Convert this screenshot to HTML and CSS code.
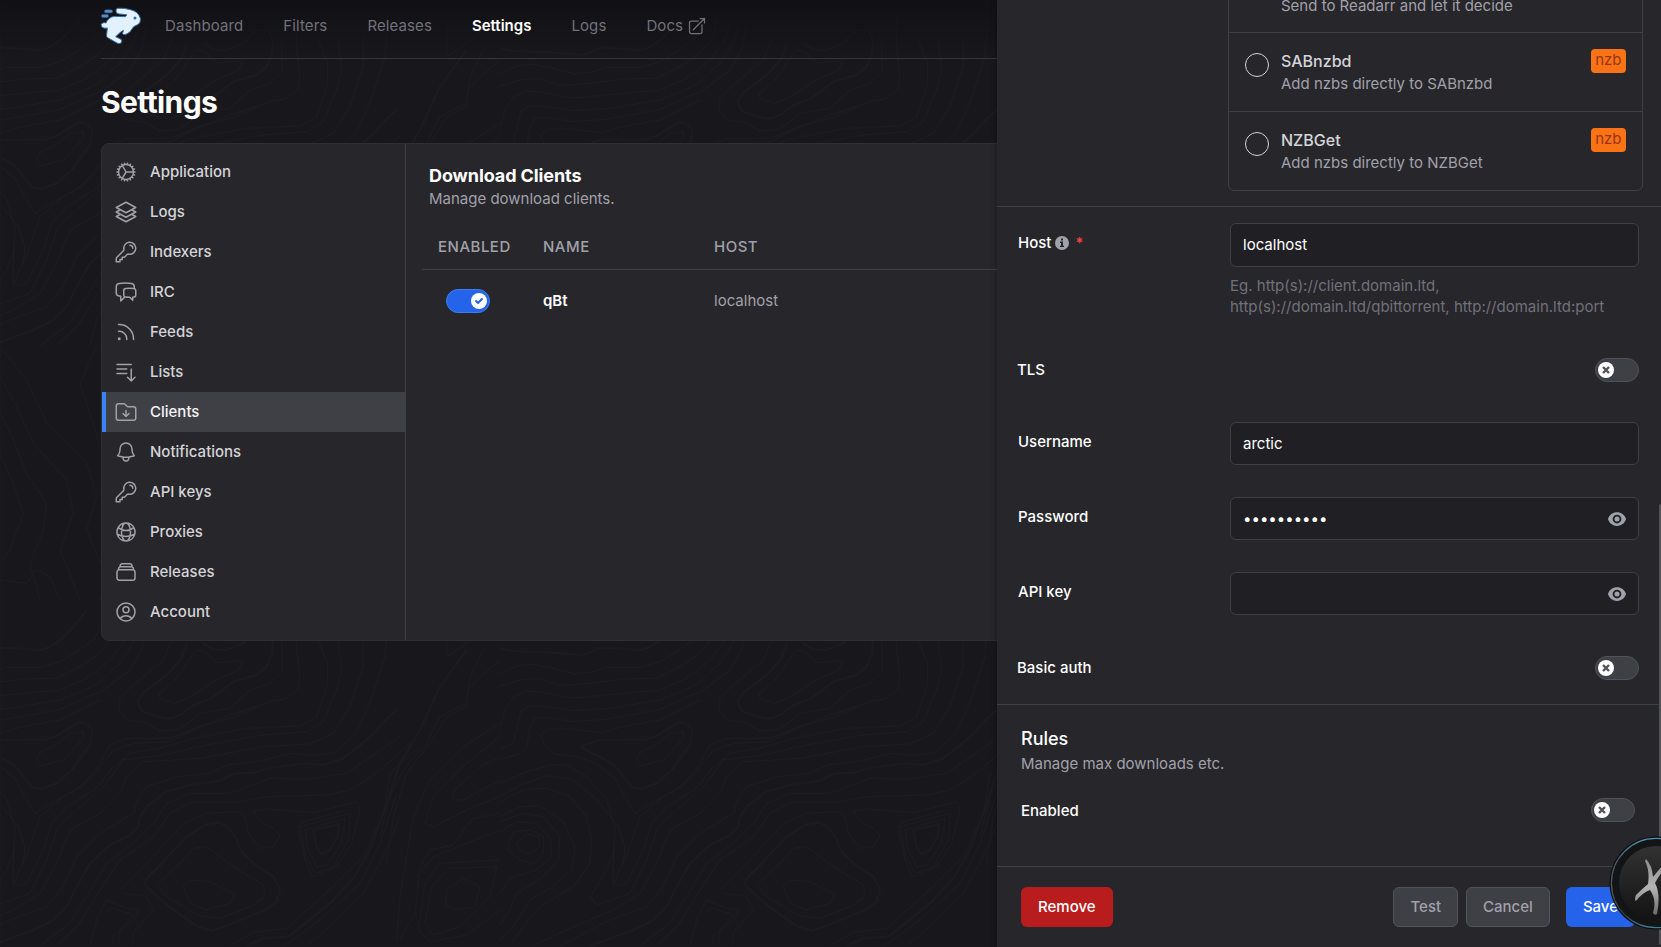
FILE: index.html
```html
<!DOCTYPE html>
<html lang="en">

<head>
  <meta charset="UTF-8">
  <title>Settings</title>
  <link rel="stylesheet" href="styles.css">
</head>

<body>
  <!-- topography background, 600x600 tile -->
  <svg class="topography" width="1661" height="947">
    <defs>
      <pattern id="topo" width="600" height="600" patternUnits="userSpaceOnUse">
        <g id="contours" transform="translate(500 30) scale(.33333)" fill="none" stroke-linejoin="round">
          <g stroke-width="5">
            <path d="M0 55L40 63 150 67 240 75 270 68 300 53 350 55 420 61 450 50 475 35 520 -10 560 -60" />
            <path d="M860 40L845 85 800 135 730 188 712 215 725 242 770 260 810 266 840 255 880 226 930 208 1000 155 1070 135 1100 110 1117 70 1118 30 1105 0 1070 0 1030 40 980 60 940 58 910 40" />
            <path d="M440 328L300 330 245 348 250 356 340 402 395 472 420 477 470 460 515 420 570 345 578 300 555 277 530 280 470 318Z" />
            <path d="M1490 240L1465 262 1400 330 1330 385 1270 405 1220 400 1120 412 1060 428 1005 430 960 452 870 465 800 485 740 530 720 560 715 590 690 615 630 645 570 700 530 770 500 830 460 870 400 900 270 947" />
            <path d="M740 745L790 695 860 620 920 583 955 577 985 592 1005 620 1025 665 1060 700 1120 740 1140 780 1130 815 1095 840 1010 875 935 903 890 888 800 825 745 775 733 760Z" />
            <path d="M1240 600L1285 590 1318 582 1312 620 1290 660 1265 673 1250 652Z" />
            <path d="M1040 947L1090 925 1165 920 1210 885 1290 820 1360 745 1410 660 1460 520 1500 400 1560 300 1620 170 1700 60" />
          </g>
          <g stroke-width="3">
            <path d="M0 130L50 108 100 103 160 115 225 132 280 125 320 112 420 112 480 95 530 65 580 30 600 0 620 -60" />
            <path d="M0 168L60 150 120 145 180 167 270 160 370 147 470 145 540 110 600 70 640 20 650 -40" />
            <path d="M0 300L15 240 40 200 80 184 120 186 220 204 370 190 480 180 560 145 630 90 670 40 690 -20" />
            <path d="M0 355L40 340 50 300 62 245 90 228 130 228 220 242 330 235 480 210 590 165 660 100 700 40 720 -30" />
            <path d="M0 388L60 372 80 350 90 290 105 265 135 262 220 275 320 268 480 238 610 180 690 120 725 60 740 -20" />
            <path d="M600 210L480 270 370 290 300 308 200 296 140 298 122 315 135 350 165 372 230 380 290 400 350 450 385 520 405 550 460 515 540 475 600 400 630 345 680 325 810 325 900 290 1000 262 1100 220" />
            <path d="M820 20L790 90 700 165 660 205 658 240 680 270 730 276 780 303 840 298 900 250 990 235 1050 180 1110 160 1145 125 1145 20" />
            <path d="M890 60L915 65 950 98 1010 93 1028 97 1015 120 950 150 870 200 825 220 780 205 778 190 830 145 870 85Z" />
            <path d="M1190 -40L1190 60 1200 130 1195 175 1160 205 1110 215 990 255 880 300 810 335 700 340 640 360 600 410 570 450 490 500 420 560 390 650 340 765 340 700 345 590 320 510 260 440 200 405 150 405 80 425 0 460" />
            <path d="M1255 30L1283 100 1283 160 1250 260 1200 288 1040 295 880 325 780 355 690 370 640 410 590 475 500 530 455 580 430 660 380 760 340 768" />
            <path d="M1313 20L1325 120 1310 180 1270 275 1225 305 1090 315 920 345 790 375 670 390 610 470 530 540 475 590 440 690 390 790 290 825 272 800 320 720 345 650" />
            <path d="M1390 20L1390 110 1350 230 1300 310 1230 342 1090 350 900 385 730 395 680 440 660 490 600 550 510 600 470 700 420 790 340 840 200 900 100 947" />
            <path d="M1460 0L1455 80 1420 190 1370 310 1300 370 1240 376 1170 370 1080 393 980 405 930 430 830 440 740 470 715 500 700 550 600 610 530 680 490 770 440 830 330 870 180 947" />
            <path d="M1500 320L1420 375 1340 430 1230 447 1110 445 990 490 870 490 800 520 760 580 710 630 620 700 560 800 510 880 420 947" />
            <path d="M1530 340L1430 430 1350 480 1280 495 1100 500 1010 517 870 517 810 550 760 620 660 690 600 780 540 880 470 947" />
            <path d="M1560 350L1470 430 1450 550 1390 680 1300 770 1210 850 1160 895 1060 907 990 947" />
            <path d="M660 780L750 690 850 580 920 550 1020 545 1035 560 1045 610 1080 655 1120 650 1140 615 1120 595 1080 575 1060 545 1100 537 1240 548 1370 515 1380 540 1355 640 1310 710 1240 742 1215 690 1192 590 1210 575 1330 543" />
            <path d="M770 765L840 700 880 655 920 650 1000 710 1090 765 1095 800 1060 825 960 865 900 858 800 800Z" />
            <path d="M850 770L870 750 930 755 1005 795 990 820 920 840 870 820Z" />
            <path d="M1215 600L1335 565 1325 640 1280 705 1250 710 1225 660Z" />
            <path d="M1200 590L1350 550 1345 630 1300 710 1245 730 1215 670Z" />
            <path d="M410 385L425 365 460 350 510 310 550 305 550 325 490 390 420 407Z" />
            <path d="M0 500L60 465 140 437 220 450 290 510 355 590 375 650 370 700" />
            <path d="M0 515L70 480 140 474 210 500 260 560 275 630 270 700 220 770 120 830 70 890 30 947" />
            <path d="M0 560L60 530 120 528 190 575 225 650 215 720 150 775 90 810 40 890 0 930" />
            <path d="M0 575L70 550 130 560 180 620 175 690 130 740 50 790 30 840 0 885" />
            <path d="M0 605L50 575 110 580 150 625 155 680 110 720 30 745 0 790" />
            <path d="M25 640L40 605 95 600 130 620 130 670 105 700 60 690 25 660Z" />
            <path d="M50 640L80 612 115 620 120 650 90 672 60 662Z" />
            <path d="M570 947L590 870 620 810 680 835 720 840 700 870 640 920 640 947" />
            <path d="M610 850L640 835 700 855 660 900 655 947M670 790L740 800 760 840 700 910 695 947" />
            <path d="M1490 490L1440 640 1380 760 1260 870 1170 935 1150 947M1500 560L1450 680 1390 790 1290 890 1220 947" />
            <path d="M1640 -20L1640 80 1700 40 1760 -10M1750 60L1710 140 1700 220 1620 260 1580 340 1510 420 1470 500 1440 620" />
            <path d="M1800 90L1730 150 1705 180 1700 230 1640 260 1590 340 1520 430 1480 560 1460 700" />
            <path d="M1800 380L1740 410 1665 480 1655 510 1690 510 1800 450M1800 320L1700 400 1600 500 1575 580 1600 590 1720 530 1800 500" />
            <path d="M1800 280L1690 350 1590 450 1540 560 1500 800 1490 930M1800 550L1720 565 1690 600 1660 645 1590 660 1560 710 1545 850 1500 930" />
            <path d="M1790 710L1650 715 1595 770 1575 880 1600 915 1680 890 1770 800Z" />
            <path d="M1640 780L1690 745 1740 770 1725 830 1660 840 1638 825Z" />
            <path d="M1800 690L1620 700 1575 760 1555 900 1590 935 1700 915 1800 840M1800 600L1700 640 1600 680 1550 740" />
          </g>
          <!-- part of the tile below the visible hills -->
          <g stroke-width="3">
            <path d="M300 950L380 1050 440 1180 560 1300 590 1400 560 1500 620 1640 600 1710M300 1040L350 1130 400 1240 500 1350 520 1450 480 1560 540 1710M300 1150L340 1230 380 1330 440 1420 430 1500 390 1600 420 1710M300 1270L340 1360 370 1450 330 1560 300 1600M300 1650L380 1660 410 1620 450 1640 480 1710M590 950L540 1060 570 1150 600 1250" />
          </g>
        </g>
        <use href="#contours" x="-600" />
      </pattern>
    </defs>
    <rect width="1661" height="947" fill="url(#topo)" />
  </svg>

  <div class="page">
    <header class="header">
      <nav class="nav">
        <svg class="logo" viewBox="61 18 126 120">
          <g fill="#5a8fc8" stroke="#1d4168" stroke-width="2">
            <rect x="74" y="29" width="25" height="10" rx="5" />
            <rect x="65" y="43" width="22" height="10" rx="5" />
          </g>
          <path fill="#e2f1fd" stroke="#2f70aa" stroke-width="3" stroke-linejoin="round" d="M113 25Q134 23 152 29Q176 34 182 55Q184 71 170 76Q160 79 157 87Q151 99 139 103Q131 106 128 100Q132 95 131 91L122 97L108 110L124 118Q129 122 124 129Q118 133 112 129L84 113Q79 110 81 103L83 84Q72 87 66 80Q62 72 69 69Q74 67 79 69Q85 52 104 49L136 50Q142 47 141 44L119 42Q108 41 109 33Q109 27 113 25Z" />
          <circle cx="166" cy="54" r="4.5" fill="#2f70aa" />
        </svg>
        <a class="nav-link">Dashboard</a>
        <a class="nav-link">Filters</a>
        <a class="nav-link">Releases</a>
        <a class="nav-link active">Settings</a>
        <a class="nav-link">Logs</a>
        <a class="nav-link">Docs
          <svg class="external" viewBox="0 0 24 24"><path d="M13.5 6H5.25A2.25 2.25 0 0 0 3 8.25v10.5A2.25 2.25 0 0 0 5.25 21h10.5A2.25 2.25 0 0 0 18 18.75V10.5m-10.5 6L21 3m0 0h-5.25M21 3v5.25" /></svg>
        </a>
      </nav>
    </header>

    <h1 class="title">Settings</h1>

    <div class="card">
      <aside class="sidebar">
        <a class="side-link">
          <svg viewBox="0 0 24 24"><path d="M4.5 12a7.5 7.5 0 0 0 15 0m-15 0a7.5 7.5 0 1 1 15 0m-15 0H3m16.5 0H21m-1.5 0H12m-8.457 3.077 1.41-.513m14.095-5.13 1.41-.513M5.106 17.785l1.15-.964m11.49-9.642 1.149-.964M7.501 19.795l.75-1.3m7.5-12.99.75-1.3m-6.063 16.658.26-1.477m2.605-14.772.26-1.477m0 17.726-.26-1.477M10.698 4.614l-.26-1.477M16.5 19.794l-.75-1.299M7.5 4.205 12 12m6.894 5.785-1.149-.964M6.256 7.178l-1.15-.964m15.352 8.864-1.41-.513M4.954 9.435l-1.41-.514M12.002 12l-3.75 6.495" /></svg>
          <span>Application</span>
        </a>
        <a class="side-link">
          <svg viewBox="0 0 24 24"><path d="M6.429 9.75 2.25 12l4.179 2.25m0-4.5 5.571 3 5.571-3m-11.142 0L2.25 7.5 12 2.25l9.75 5.25-4.179 2.25m0 0L21.75 12l-4.179 2.25m0 0 4.179 2.25L12 21.75 2.25 16.5l4.179-2.25m11.142 0-5.571 3-5.571-3" /></svg>
          <span>Logs</span>
        </a>
        <a class="side-link">
          <svg viewBox="0 0 24 24"><path id="key" d="M15.75 5.25a3 3 0 0 1 3 3m3 0a6 6 0 0 1-7.029 5.912c-.563-.097-1.159.026-1.563.43L10.5 17.25H8.25v2.25H6v2.25H2.25v-2.818c0-.597.237-1.17.659-1.591l6.499-6.499c.404-.404.527-1 .43-1.563A6 6 0 1 1 21.75 8.25Z" /></svg>
          <span>Indexers</span>
        </a>
        <a class="side-link">
          <svg viewBox="0 0 24 24"><path d="M20.25 8.511c.884.284 1.5 1.128 1.5 2.097v4.286c0 1.136-.847 2.1-1.98 2.193-.34.027-.68.052-1.02.072v3.091l-3-3c-1.354 0-2.694-.055-4.02-.163a2.115 2.115 0 0 1-.825-.242m9.345-8.334a2.126 2.126 0 0 0-.476-.095 48.64 48.64 0 0 0-8.048 0c-1.131.094-1.976 1.057-1.976 2.192v4.286c0 .837.46 1.58 1.155 1.951m9.345-8.334V6.637c0-1.621-1.152-3.026-2.76-3.235A48.455 48.455 0 0 0 11.25 3c-2.115 0-4.198.137-6.24.402-1.608.209-2.76 1.614-2.76 3.235v6.226c0 1.621 1.152 3.026 2.76 3.235.577.075 1.157.14 1.74.194V21l4.155-4.155" /></svg>
          <span>IRC</span>
        </a>
        <a class="side-link">
          <svg viewBox="0 0 24 24"><path d="M12.75 19.5v-.75a7.5 7.5 0 0 0-7.5-7.5H4.5m0-6.75h.75c7.87 0 14.25 6.38 14.25 14.25v.75M6 18.75a.75.75 0 1 1-1.5 0 .75.75 0 0 1 1.5 0Z" /></svg>
          <span>Feeds</span>
        </a>
        <a class="side-link">
          <svg viewBox="0 0 24 24"><path d="M3 4.5h14.25M3 9h9.75M3 13.5h9.75m4.5-4.5v12m0 0-3.75-3.75M17.25 21 21 17.25" /></svg>
          <span>Lists</span>
        </a>
        <a class="side-link active">
          <svg viewBox="0 0 24 24"><path d="m9 13.5 3 3m0 0 3-3m-3 3v-6m1.06-4.19-2.12-2.12a1.5 1.5 0 0 0-1.061-.44H4.5A2.25 2.25 0 0 0 2.25 6v12a2.25 2.25 0 0 0 2.25 2.25h15A2.25 2.25 0 0 0 21.75 18V9a2.25 2.25 0 0 0-2.25-2.25h-5.379a1.5 1.5 0 0 1-1.06-.44Z" /></svg>
          <span>Clients</span>
        </a>
        <a class="side-link">
          <svg viewBox="0 0 24 24"><path d="M14.857 17.082a23.848 23.848 0 0 0 5.454-1.31A8.967 8.967 0 0 1 18 9.75V9A6 6 0 0 0 6 9v.75a8.967 8.967 0 0 1-2.312 6.022c1.733.64 3.56 1.085 5.455 1.31m5.714 0a24.255 24.255 0 0 1-5.714 0m5.714 0a3 3 0 1 1-5.714 0" /></svg>
          <span>Notifications</span>
        </a>
        <a class="side-link">
          <svg viewBox="0 0 24 24"><use href="#key" /></svg>
          <span>API keys</span>
        </a>
        <a class="side-link">
          <svg viewBox="0 0 24 24"><path d="M12 21a9.004 9.004 0 0 0 8.716-6.747M12 21a9.004 9.004 0 0 1-8.716-6.747M12 21c2.485 0 4.5-4.03 4.5-9S14.485 3 12 3m0 18c-2.485 0-4.5-4.03-4.5-9S9.515 3 12 3m0 0a8.997 8.997 0 0 1 7.843 4.582M12 3a8.997 8.997 0 0 0-7.843 4.582m15.686 0A11.953 11.953 0 0 1 12 10.5c-2.998 0-5.74-1.1-7.843-2.918m15.686 0A8.959 8.959 0 0 1 21 12c0 .778-.099 1.533-.284 2.253m0 0A17.919 17.919 0 0 1 12 16.5c-3.162 0-6.133-.815-8.716-2.247m0 0A9.015 9.015 0 0 1 3 12c0-1.605.42-3.113 1.157-4.418" /></svg>
          <span>Proxies</span>
        </a>
        <a class="side-link">
          <svg viewBox="0 0 24 24"><path d="M6 6.878V6a2.25 2.25 0 0 1 2.25-2.25h7.5A2.25 2.25 0 0 1 18 6v.878m-12 0c.235-.083.487-.128.75-.128h10.5c.263 0 .515.045.75.128m-12 0A2.25 2.25 0 0 0 4.5 9v.878m13.5-3A2.25 2.25 0 0 1 19.5 9v.878m0 0a2.246 2.246 0 0 0-.75-.128H5.25c-.263 0-.515.045-.75.128m15 0A2.25 2.25 0 0 1 21 12v6a2.25 2.25 0 0 1-2.25 2.25H5.25A2.25 2.25 0 0 1 3 18v-6c0-.98.626-1.813 1.5-2.122" /></svg>
          <span>Releases</span>
        </a>
        <a class="side-link">
          <svg viewBox="0 0 24 24"><path d="M17.982 18.725A7.488 7.488 0 0 0 12 15.75a7.488 7.488 0 0 0-5.982 2.975m11.963 0a9 9 0 1 0-11.963 0m11.963 0A8.966 8.966 0 0 1 12 21a8.966 8.966 0 0 1-5.982-2.275M15 9.75a3 3 0 1 1-6 0 3 3 0 0 1 6 0Z" /></svg>
          <span>Account</span>
        </a>
      </aside>

      <main class="content">
        <h2 class="content-title">Download Clients</h2>
        <p class="content-sub">Manage download clients.</p>
        <div class="row row-head">
          <span>ENABLED</span>
          <span>NAME</span>
          <span>HOST</span>
        </div>
        <div class="row">
          <div class="toggle on">
            <span class="knob"><svg viewBox="0 0 12 12"><path d="M3.707 5.293a1 1 0 0 0-1.414 1.414l1.414-1.414zM5 8l-.707.707a1 1 0 0 0 1.414 0L5 8zm4.707-3.293a1 1 0 0 0-1.414-1.414l1.414 1.414zm-7.414 2 2 2 1.414-1.414-2-2-1.414 1.414zm3.414 2 4-4-1.414-1.414-4 4 1.414 1.414z" /></svg></span>
          </div>
          <span class="client-name">qBt</span>
          <span class="client-host">localhost</span>
        </div>
      </main>
    </div>
  </div>

  <section class="drawer">
    <div class="drawer-body">
      <div class="type-list">
        <div class="type">
          <span class="radio"></span>
          <div>
            <div class="type-name">Readarr</div>
            <div class="type-desc">Send to Readarr and let it decide</div>
          </div>
        </div>
        <div class="type">
          <span class="radio"></span>
          <div>
            <div class="type-name">SABnzbd</div>
            <div class="type-desc">Add nzbs directly to SABnzbd</div>
          </div>
          <span class="badge">nzb</span>
        </div>
        <div class="type">
          <span class="radio"></span>
          <div>
            <div class="type-name">NZBGet</div>
            <div class="type-desc">Add nzbs directly to NZBGet</div>
          </div>
          <span class="badge">nzb</span>
        </div>
      </div>

      <div class="fields">
        <div class="field field-host">
          <label>Host
            <svg class="info" viewBox="0 0 14 14"><path fill-rule="evenodd" d="M7 0a7 7 0 1 1 0 14A7 7 0 0 1 7 0ZM6 2.6h2v1.9H6ZM5 5.6h3v4.1h1v1.4H5V9.700h1V7H5Z" /></svg>
            <span class="required">*</span>
          </label>
          <div>
            <input class="input input-host" type="text" value="localhost">
            <p class="help">Eg. http(s)://client.domain.ltd, http(s)://domain.ltd/qbittorrent, http://domain.ltd:port</p>
          </div>
        </div>
        <div class="switch-row">
          <span>TLS</span>
          <div class="toggle"><span class="knob"><svg viewBox="0 0 12 12"><path id="cross" d="M3 3l6 6M9 3l-6 6" /></svg></span></div>
        </div>
        <div class="field">
          <label>Username</label>
          <input class="input" type="text" value="arctic">
        </div>
        <div class="field">
          <label>Password</label>
          <div class="secret">
            <input class="input" type="text" value="••••••••••">
            <svg class="eye" viewBox="0 0 24 24"><g id="eye"><path d="M12 15a3 3 0 1 0 0-6 3 3 0 0 0 0 6Z" /><path fill-rule="evenodd" d="M1.323 11.447C2.811 6.976 7.028 3.750 12.001 3.750c4.970 0 9.185 3.223 10.675 7.690.120.362.120.752 0 1.113-1.487 4.471-5.705 7.697-10.677 7.697-4.970 0-9.186-3.223-10.675-7.690a1.762 1.762 0 0 1 0-1.113ZM17.250 12a5.250 5.250 0 1 1-10.500 0 5.250 5.250 0 0 1 10.500 0Z" /></g></svg>
          </div>
        </div>
        <div class="field">
          <label>API key</label>
          <div class="secret">
            <input class="input" type="text">
            <svg class="eye" viewBox="0 0 24 24"><use href="#eye" /></svg>
          </div>
        </div>
        <div class="switch-row basic">
          <span>Basic auth</span>
          <div class="toggle"><span class="knob"><svg viewBox="0 0 12 12"><use href="#cross" /></svg></span></div>
        </div>
      </div>

      <div class="rules">
        <h3 class="rules-title">Rules</h3>
        <p class="rules-sub">Manage max downloads etc.</p>
        <div class="rules-row">
          <span>Enabled</span>
          <div class="toggle"><span class="knob"><svg viewBox="0 0 12 12"><use href="#cross" /></svg></span></div>
        </div>
      </div>
    </div>

    <footer class="drawer-footer">
      <button class="btn btn-red">Remove</button>
      <div class="footer-right">
        <button class="btn btn-gray">Test</button>
        <button class="btn btn-gray">Cancel</button>
        <button class="btn btn-blue">Save</button>
      </div>
    </footer>
    <div class="scrollbar"></div>
  </section>

  <!-- floating round widget -->
  <svg class="orb" viewBox="0 0 52 94">
    <defs>
      <linearGradient id="orb-ring" x1="0" y1="0" x2="0" y2="1">
        <stop offset="0" stop-color="#4d93b3" />
        <stop offset=".25" stop-color="#4c585f" />
        <stop offset=".6" stop-color="#55585a" />
        <stop offset=".85" stop-color="#30383c" />
        <stop offset="1" stop-color="#3d7e99" />
      </linearGradient>
      <linearGradient id="orb-face" x1="0" y1="0" x2="0" y2="1">
        <stop offset="0" stop-color="#323232" />
        <stop offset="1" stop-color="#131313" />
      </linearGradient>
      <linearGradient id="orb-glyph" x1="0" y1="0" x2="0" y2="1">
        <stop offset="0" stop-color="#8c8c8c" />
        <stop offset=".5" stop-color="#b5b5b5" />
        <stop offset="1" stop-color="#6b6b6b" />
      </linearGradient>
    </defs>
    <circle cx="47" cy="47" r="46.500" fill="#0c0d0e" />
    <circle cx="47" cy="47" r="44.600" fill="#131415" stroke="url(#orb-ring)" stroke-width="1.200" />
    <circle cx="47" cy="47" r="37" fill="url(#orb-face)" />
    <path fill="url(#orb-glyph)" d="M37 23Q43 29 44 41Q48 36 54 29V35Q49 41 46 47Q52 58 48 78Q46 80 44 77Q48 64 41 54Q33 57 27 65Q25 64 27 59Q33 53 39 48Q41 35 36 25Z" />
  </svg>
</body>

</html>
```
FILE: styles.css
```css
* {
  box-sizing: border-box;
}

body {
  margin: 0;
  height: 947px;
  overflow: hidden;
  position: relative;
  background: #18171c;
  color: #fff;
  font-family: Inter, "Liberation Sans", sans-serif;
  font-size: 15px;
  line-height: 20px;
}

h1, h2, h3, p {
  margin: 0;
}

.topography {
  position: absolute;
  top: 0;
  left: 0;
  stroke: #1c1c20;
}

.page {
  position: relative;
}

/* header */
.header {
  height: 59px;
  padding-left: 101px;
  background: linear-gradient(#111015, rgba(24, 23, 28, 0));
}

.nav {
  display: flex;
  align-items: center;
  gap: 40px;
  height: 59px;
  padding-bottom: 7px;
  border-bottom: 1px solid #35353a;
}

.logo {
  width: 42px;
  height: 40px;
  margin: 0 -18px 0 -1px;
}

.nav-link {
  display: flex;
  align-items: center;
  gap: 4px;
  color: #71717a;
  letter-spacing: 0.1px;
}

.nav-link:nth-of-type(1) {
  margin-left: 1px;
}

.nav-link.active {
  color: #fff;
  font-weight: 600;
  letter-spacing: 0;
}

.external {
  width: 20px;
  height: 20px;
  fill: none;
  stroke: #71717a;
  stroke-width: 1.5;
  stroke-linecap: round;
  stroke-linejoin: round;
}

.title {
  margin: 25px 0 23px 101px;
  font-size: 30px;
  line-height: 36px;
  font-weight: 700;
  letter-spacing: -0.6px;
}

/* settings card */
.card {
  display: grid;
  grid-template-columns: 304px 1fr;
  height: 498px;
  margin-left: 101px;
  border: 1px solid #303034;
  border-radius: 8px;
  background: #27262b;
}

.sidebar {
  padding: 8px 0;
  border-right: 1px solid #3f3f46;
}

.side-link {
  display: flex;
  align-items: center;
  gap: 12px;
  height: 40px;
  padding-left: 8px;
  border-left: 4px solid transparent;
  color: #d4d4d8;
  font-weight: 500;
}

.side-link svg {
  width: 24px;
  height: 24px;
  fill: none;
  stroke: #a1a1aa;
  stroke-width: 1.5;
  stroke-linecap: round;
  stroke-linejoin: round;
}

.side-link.active {
  border-left-color: #3b82f6;
  background: #3f3f46;
  color: #f4f4f5;
}

.content {
  padding: 19px 0 0 16px;
}

.content-title {
  padding-left: 7px;
  font-size: 18px;
  line-height: 26px;
  font-weight: 700;
  letter-spacing: -0.1px;
}

.content-sub {
  padding-left: 7px;
  color: #a1a1aa;
}

.row {
  display: grid;
  grid-template-columns: 105px 171px 1fr;
  align-items: center;
  height: 62px;
  padding-left: 16px;
}

.row-head {
  height: 45px;
  margin-top: 16px;
  border-bottom: 1px solid #3f3f46;
  color: #a1a1aa;
  font-weight: 500;
  letter-spacing: 0.5px;
}

.row .toggle {
  margin-left: 8px;
}

.client-name {
  font-weight: 600;
}

.client-host {
  color: #a1a1aa;
}

/* switches */
.toggle {
  display: flex;
  align-items: center;
  width: 44px;
  height: 24px;
  padding: 0 2px;
  border: 1px solid #52525b;
  border-radius: 12px;
  background: #3f3f46;
}

.toggle.on {
  justify-content: flex-end;
  border-color: #3b7df0;
  background: #2563eb;
}

.knob {
  display: flex;
  align-items: center;
  justify-content: center;
  width: 16px;
  height: 16px;
  border-radius: 50%;
  background: #fff;
}

.knob svg {
  width: 12px;
  height: 12px;
  fill: none;
  stroke: #52525b;
  stroke-width: 2.4;
}

.toggle.on svg {
  fill: #2563eb;
  stroke: none;
}

/* slide over */
.drawer {
  position: absolute;
  top: 0;
  right: 0;
  display: flex;
  flex-direction: column;
  width: 664px;
  height: 947px;
  background: #27262b;
  box-shadow: 0 0 6px rgba(0, 0, 0, 0.35);
}

.drawer-body {
  flex: 1;
  overflow: hidden;
}

.type-list {
  width: 415px;
  margin: -47px 0 15px 231px;
  border: 1px solid #3f3f46;
  border-radius: 6px;
}

.type {
  display: grid;
  grid-template-columns: 36px 1fr auto;
  align-items: start;
  height: 79px;
  padding: 17px 16px 0;
  border-bottom: 1px solid #3f3f46;
}

.type:first-child {
  padding-top: 18px;
}

.type:last-child {
  height: 78px;
  border-bottom: none;
}

.radio {
  width: 24px;
  height: 24px;
  margin-top: 3px;
  border: 1px solid #d4d4d8;
  border-radius: 50%;
}

.type-name {
  line-height: 23px;
  color: #d4d4d8;
  font-size: 16px;
  font-weight: 500;
}

.type-desc {
  line-height: 22px;
  color: #a1a1aa;
}

.badge {
  height: 24px;
  margin-top: -1px;
  padding: 0 4.5px;
  border-radius: 4px;
  background: #f97316;
  color: #9a3412;
  line-height: 22px;
}

.fields {
  border-top: 1px solid #3f3f46;
  border-bottom: 1px solid #3f3f46;
}

.field {
  display: grid;
  grid-template-columns: 212px 409px;
  height: 75px;
  padding: 16px 0 0 21px;
}

.field label {
  display: flex;
  align-items: center;
  height: 20px;
  margin-top: 10px;
  font-weight: 500;
}

.field-host {
  height: 127px;
}

.info {
  width: 14px;
  height: 14px;
  margin-left: 4px;
  fill: #a1a1aa;
}

.required {
  margin-left: 6px;
  color: #ef4444;
}

.input {
  display: block;
  width: 409px;
  height: 43px;
  padding: 0 12px 1px;
  border: 1px solid #3f3f46;
  border-radius: 6px;
  background: #201f24;
  color: #fff;
  font: inherit;
}

.input-host {
  height: 44px;
  padding-bottom: 2px;
}

.help {
  margin-top: 8px;
  line-height: 21px;
  color: #71717a;
}

.secret {
  position: relative;
}

.eye {
  position: absolute;
  top: 12px;
  right: 12px;
  width: 20px;
  height: 20px;
  fill: #a1a1aa;
}

.switch-row {
  display: flex;
  align-items: center;
  justify-content: space-between;
  height: 72px;
  padding: 0 22px 0 20px;
  font-weight: 500;
}

.switch-row.basic {
  height: 73px;
}

.rules {
  padding: 21px 26px 0 24px;
}

.rules-title {
  font-size: 18px;
  line-height: 26px;
  font-weight: 500;
}

.rules-sub {
  line-height: 24px;
  color: #a1a1aa;
}

.rules-row {
  display: flex;
  align-items: center;
  justify-content: space-between;
  margin-top: 22px;
  font-weight: 500;
}

.rules-row > span {
  padding-top: 2px;
}

.drawer-footer {
  display: flex;
  justify-content: space-between;
  height: 81px;
  padding: 20px 26px 0 24px;
  border-top: 1px solid #3f3f46;
}

.footer-right {
  display: flex;
  gap: 8px;
}

.btn {
  height: 40px;
  padding: 0 16px;
  border: 1px solid transparent;
  border-radius: 6px;
  color: #fff;
  font: inherit;
  font-weight: 500;
}

.btn-red {
  background: #b91c1c;
}

.btn-gray {
  border-color: #52525b;
  background: #3f3f46;
  color: #a1a1aa;
}

.btn-blue {
  margin-left: 8px;
  background: #2563eb;
}

.scrollbar {
  position: absolute;
  top: 504px;
  right: 0;
  width: 2px;
  height: 441px;
  border-radius: 2px 0 0 2px;
  background: #52525b;
}

.orb {
  position: absolute;
  top: 836px;
  right: 0;
  width: 52px;
  height: 94px;
}
```
